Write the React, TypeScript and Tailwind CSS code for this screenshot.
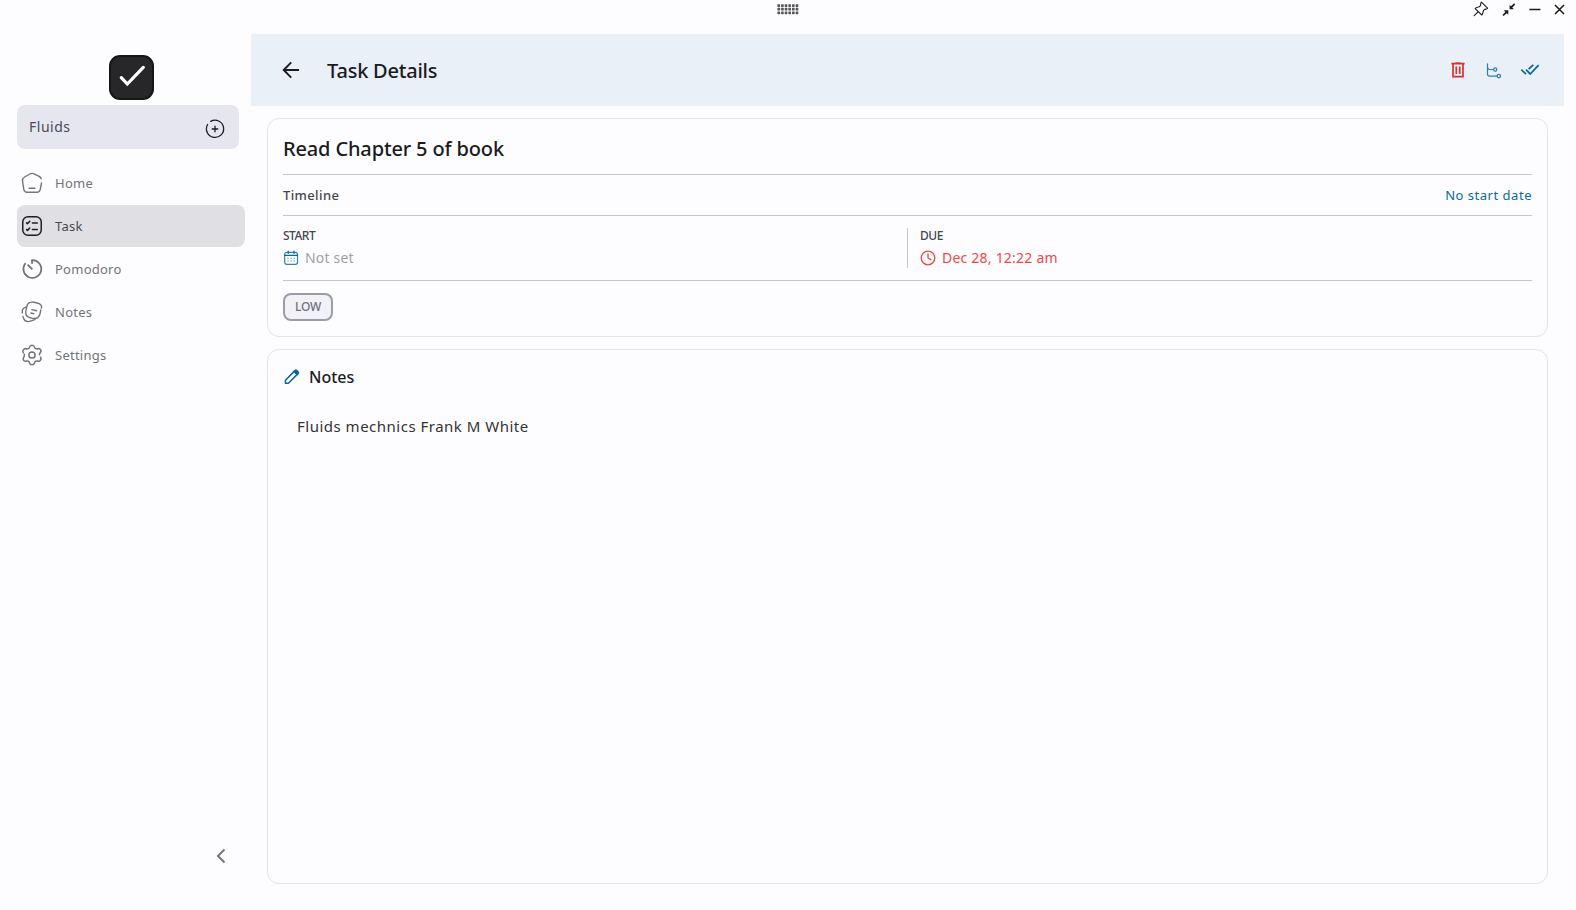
import React from 'react';

const stroke = {
  fill: 'none',
  stroke: 'currentColor',
  strokeWidth: 1.5,
  strokeLinecap: 'round' as const,
  strokeLinejoin: 'round' as const,
};

const HomeIcon = () => (
  <svg width="24" height="24" viewBox="0 0 24 24" {...stroke} strokeWidth={1.4}>
    <path d="M21.3 7.6C20.8 6.6 19.8 5.9 18.7 5.2L14.4 3.1C13 2.2 11.2 2.2 9.8 3L4.6 6C2.8 7.1 2.3 8 2.5 10L3.7 17.8C4 19.8 5 21.3 7.2 21.3H16.8C19 21.3 20 19.8 20.4 17.8L21.5 12" />
    <path d="M9 17.2H15" />
  </svg>
);

const TaskIcon = () => (
  <svg width="24" height="24" viewBox="0 0 24 24" {...stroke}>
    <rect x="2.75" y="2.75" width="18.5" height="18.5" rx="5.3" />
    <path d="M12.4 8.9H17.3M6.6 8.9L7.4 9.7L9.7 7.4M12.4 15.6H17.3M6.6 15.6L7.4 16.4L9.7 14.1" />
  </svg>
);

const PomodoroIcon = () => (
  <svg width="24" height="24" viewBox="0 0 24 24" {...stroke} strokeWidth={1.8}>
    <path d="M12 6.8V3.1A8.9 8.9 0 1 1 5.6 6.2" strokeLinecap="butt" />
    <path d="M7.6 7.6L12.4 12.4" strokeLinecap="butt" />
  </svg>
);

const NotesIcon = () => (
  <svg width="24" height="24" viewBox="0 0 24 24" {...stroke} strokeWidth={1.4}>
    <path d="M20.8 10L19.9 14C19 17.6 17.5 18.8 13.8 18.4C13.2 18.4 12.6 18.3 11.9 18.1L10.2 17.7C6.2 16.7 5 14.7 5.9 10.6L6.9 6.3C7.1 5.5 7.4 4.7 7.7 4.1C9 1.7 11.2 1.9 14 2.3L17.2 3C21.2 3.9 22 6 21.4 8" />
    <path d="M15.4 18.7C14.7 19.6 13.5 20.2 12 20.7L10.4 21.2C6.5 22.4 4.5 21.4 3.3 17.5L3 16.4M2.3 12.8C1.8 9.8 3 8.2 5.8 7.2" />
    <path d="M11.8 9.6L16.5 10.8M10.9 13L13.8 13.7" />
  </svg>
);

const SettingsIcon = () => (
  <svg width="24" height="24" viewBox="0 0 24 24" {...stroke} strokeWidth={1.5}>
    <circle cx="12" cy="12" r="3.1" />
    <path d="M3.4 9.8C2.4 8.3 2.8 6.9 4.1 6.1C5 5.5 6.1 5.6 6.8 6C8.4 6.2 9.3 5.6 9.5 4.2C9.8 2.8 10.8 2.2 12 2.2S14.2 2.8 14.5 4.2C14.8 5.6 15.7 6.2 17.2 6C18.2 5.4 19.4 5.5 20.2 6.3C21.2 7.3 21.2 8.6 20.4 9.6C19.8 10.3 19.4 11 19.4 11.8M20.6 14.2C21.3 15.6 21.1 16.9 19.9 17.8C19 18.3 18 18.4 17.2 18C15.8 17.8 14.8 18.4 14.5 19.8C14.2 21.2 13.2 21.8 12 21.8S9.8 21.2 9.5 19.8C9.3 18.4 8.3 17.8 6.8 18C5.8 18.5 4.6 18.4 3.8 17.5C2.9 16.5 2.9 15.4 3.6 14.4C4.5 13.2 4.7 12.4 4.3 11.2" />
  </svg>
);

const navItems = [
  { label: 'Home', icon: HomeIcon },
  { label: 'Task', icon: TaskIcon },
  { label: 'Pomodoro', icon: PomodoroIcon },
  { label: 'Notes', icon: NotesIcon },
  { label: 'Settings', icon: SettingsIcon },
];

const TitleBar: React.FC = () => (
  <header className="grid h-[34px] grid-cols-[1fr_auto_1fr] items-start">
    <div />
    <svg width="22" height="11" viewBox="0 0 22 11" className="mt-1 text-[#555558]" fill="currentColor">
      {[0, 1, 2].map((row) =>
        [0, 1, 2, 3, 4, 5].map((col) => (
          <rect key={`${row}-${col}`} x={0.4 + col * 3.65} y={0.2 + row * 3.65} width="2.7" height="2.7" rx="0.6" />
        ))
      )}
    </svg>
    <div className="flex justify-end pr-2.5 text-[#1b1b1f]">
      {/* pin */}
      <svg width="16" height="16" viewBox="0 0 16 16" className="mt-px mr-[13px]" {...stroke} strokeWidth={1.1}>
        <path d="M8.4 1.2L14.6 7.2C14 8.1 12.7 8 11.7 8.4L10.4 9.7C10 11.2 10 12.9 8.8 14L2.2 7.6C3 6.3 4.8 6.2 6.3 5.8L7.4 4.6C7.7 3.5 7.5 2 8.4 1.2ZM5 10.8L1.2 14.6" />
      </svg>
      {/* shrink */}
      <svg width="14" height="14" viewBox="0 0 14 14" className="mt-[3px] mr-[13px]" fill="currentColor">
        <path d="M7.6 6.3V1.8L9 3.2L12.1.3L13.2 1.4L10.3 4.6L11.8 6.3ZM6.3 7.3H1.8L3.3 8.9L.5 12.1L1.5 13.1L4.7 10.2L6.3 11.8Z" />
      </svg>
      <svg width="12" height="14" viewBox="0 0 12 14" className="mt-[3px] mr-[13px]" {...stroke} strokeLinecap="butt">
        <path d="M.4 6.5H11.4" />
      </svg>
      <svg width="12" height="14" viewBox="0 0 12 14" className="mt-[3px]" {...stroke} strokeLinecap="butt">
        <path d="M1 2L10 11M10 2L1 11" />
      </svg>
    </div>
  </header>
);

const Sidebar: React.FC = () => (
  <aside className="flex w-[251px] shrink-0 flex-col pl-[17px]">
    <div className="mt-[21px] ml-[92px] flex size-[45px] items-center justify-center rounded-[11px] border-2 border-[#161618] bg-[#272729]">
      <svg width="41" height="41" viewBox="0 0 41 41" {...stroke} strokeWidth={3.2} className="text-white">
        <path d="M10.3 20.6L16.3 27L32.3 10.4" strokeLinejoin="miter" />
      </svg>
    </div>

    <div className="mt-[5px] flex h-11 w-[222px] items-center justify-between rounded-lg bg-[#e6e6f1] pr-[13px] pl-3">
      <span className="text-sm tracking-[0.5px] text-[#4c4a55]">Fluids</span>
      <svg width="22" height="22" viewBox="0 0 22 22" className="mt-1 text-[#1b1b1f]" {...stroke} strokeWidth={1.3}>
        <path d="M6.7 3.4A8.6 8.6 0 1 1 3.6 6.5M11 8.2V13.8M8.2 11H13.8" />
      </svg>
    </div>

    <nav className="mt-[13px] flex flex-col gap-px">
      {navItems.map(({ label, icon: Icon }) => {
        const active = label === 'Task';
        return (
          <a
            key={label}
            className={`flex h-[42px] w-[228px] items-center gap-[11px] rounded-lg pl-[3px] text-[13px] tracking-[0.25px] ${
              active ? 'bg-[#e0dfe4] text-[#1f1f22]' : 'text-[#747477]'
            }`}
          >
            <Icon />
            <span className={active ? 'pt-0.5 text-[#4a4a4e]' : 'pt-0.5'}>{label}</span>
          </a>
        );
      })}
    </nav>

    <svg width="10" height="16" viewBox="0 0 10 16" className="mt-auto mb-[46px] ml-[199px] text-[#77777a]" {...stroke} strokeWidth={2} strokeLinecap="butt">
      <path d="M8.5 1.5L2 8L8.5 14.5" strokeLinejoin="miter" />
    </svg>
  </aside>
);

const DetailHeader: React.FC = () => (
  <div className="mr-3 flex h-[72px] items-center bg-[#e9f0f8] pl-[31px] pr-6">
    <svg width="18" height="18" viewBox="0 0 18 18" className="text-[#1b1b1f]" {...stroke} strokeWidth={1.9} strokeLinecap="butt" strokeLinejoin="miter">
      <path d="M17 9H2M9.2 1.4L1.7 9L9.2 16.6" />
    </svg>
    <h1 className="ml-[27px] pt-0.5 text-xl font-medium tracking-[-0.22px] text-[#1b1b1f]">Task Details</h1>
    <div className="ml-auto flex items-center text-[#0a6a97]">
      <svg width="14" height="16" viewBox="0 0 14 16" className="mr-[21px] text-[#d93030]" {...stroke} strokeWidth={1.7} strokeLinecap="butt" strokeLinejoin="miter">
        <path d="M.4 1.7H13.6M4.4 1H9.6M2 2V14.6H12V2M5.3 4.6V12M8.7 4.6V12" />
      </svg>
      <svg width="16" height="16" viewBox="0 0 16 16" className="mt-0.5 mr-[18px] text-[#2e7fa8]" {...stroke} strokeWidth={1.2}>
        <path d="M1.5 .8V11C1.5 12.5 2.3 13.1 3.7 13.1H11M1.6 4C1.6 5.8 2.3 6.5 3.8 6.5H7.5" />
        <circle cx="9.2" cy="6.5" r="1.6" />
        <circle cx="12.8" cy="13.1" r="1.7" />
      </svg>
      <svg width="20" height="12" viewBox="0 0 20 12" {...stroke} strokeWidth={1.8} strokeLinecap="butt">
        <path d="M1.3 5.6L6 10.2M8.6 5.2L13.3 .8M6 5.6L10.3 10L18.6 1.2" />
      </svg>
    </div>
  </div>
);

const TaskCard: React.FC = () => (
  <section className="h-[219px] rounded-xl border border-[#e4e3e7] px-[15px]">
    <h2 className="flex h-[55px] items-center pt-1 text-xl font-medium tracking-[-0.15px] text-[#1b1b1f]">
      Read Chapter 5 of book
    </h2>
    <div className="flex h-[42px] items-center justify-between border-y border-[#c6c4d0] text-[13px]">
      <span className="pt-0.5 font-medium tracking-[0.38px] text-[#46464f]">Timeline</span>
      <span className="pt-0.5 tracking-[0.52px] text-[#0a6a97]">No start date</span>
    </div>
    <div className="grid h-[65px] grid-cols-[624px_1fr] border-b border-[#c6c4d0] py-3">
      <div>
        <p className="text-xs leading-4 font-medium tracking-[-0.5px] text-[#46464f]">START</p>
        <p className="mt-1 flex items-center text-sm tracking-[0.2px] text-[#a0a0a4]">
          <svg width="16" height="16" viewBox="0 0 16 16" className="mr-1.5 text-[#2e86b0]" {...stroke} strokeWidth={1.2}>
            <rect x="1.7" y="2.4" width="12.8" height="11.9" rx="2" />
            <path d="M1.7 5.4H14.5M5.2 1V3.5M11 1V3.5" className="text-[#0a6a97]" stroke="currentColor" />
            <path d="M4.6 8.3H5.4M7.7 8.3H8.5M10.7 8.3H11.5M4.6 10.9H5.4M7.7 10.9H8.5M10.7 10.9H11.5" strokeLinecap="butt" />
          </svg>
          Not set
        </p>
      </div>
      <div className="border-l border-[#c6c4d0] pl-3">
        <p className="text-xs leading-4 font-medium tracking-[-0.5px] text-[#46464f]">DUE</p>
        <p className="mt-1 flex items-center text-sm tracking-[0.22px] text-[#f04545]">
          <svg width="16" height="16" viewBox="0 0 16 16" className="mr-1.5" {...stroke} strokeWidth={1.3}>
            <circle cx="8" cy="8" r="6.8" />
            <path d="M8 4V8L10.8 9.6" />
          </svg>
          Dec 28, 12:22 am
        </p>
      </div>
    </div>
    <span className="mt-3 flex h-7 w-[50px] items-center justify-center rounded-lg border-2 border-[#9a9ca8] bg-[#f2f1f7] text-xs font-medium tracking-[-0.2px] text-[#6f7280]">
      LOW
    </span>
  </section>
);

const NotesCard: React.FC = () => (
  <section className="mt-3 h-[535px] rounded-xl border border-[#e4e3e7] px-[15px] pt-[15px]">
    <h3 className="flex items-center text-base font-medium text-[#1b1b1f]">
      <svg width="18" height="18" viewBox="0 0 18 18" className="mr-2 text-[#0a6a97]" {...stroke} strokeWidth={1.5}>
        <path d="M2.4 12.2L11.2 3.4L14.2 6.4L5.4 15.2H2.4Z" />
        <path d="M11.2 3.4L12.2 2.4Q12.9 1.8 13.6 2.4L15.2 4Q15.8 4.7 15.2 5.4L14.2 6.4Z" fill="currentColor" />
      </svg>
      Notes
    </h3>
    <p className="mt-[25px] ml-3.5 text-[15px] leading-6 tracking-[0.5px] text-[#333336]">
      Fluids mechnics Frank M White
    </p>
  </section>
);

export default function App() {
  return (
    <div className="flex h-screen flex-col overflow-hidden bg-[#fdfdff] font-['Noto_Sans',sans-serif]">
      <TitleBar />
      <div className="flex min-h-0 flex-1">
        <Sidebar />
        <main className="min-w-0 flex-1">
          <DetailHeader />
          <div className="mt-3 mr-7 ml-4">
            <TaskCard />
            <NotesCard />
          </div>
        </main>
      </div>
    </div>
  );
}
